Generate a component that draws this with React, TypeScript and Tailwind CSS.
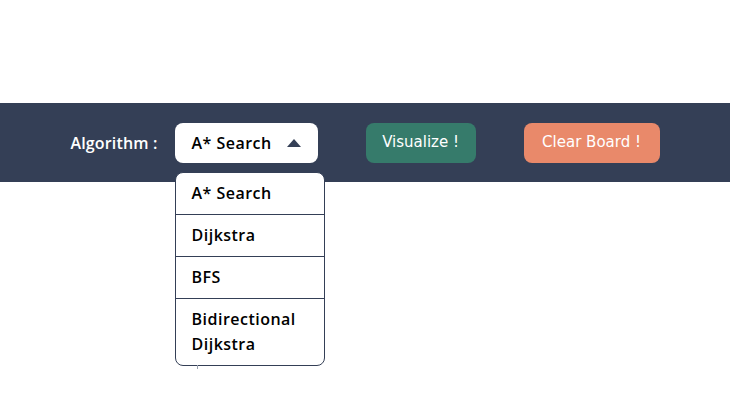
import React from "react";

const algorithms = ["A* Search", "Dijkstra", "BFS", "Bidirectional Dijkstra"];

export default function App() {
  return (
    <div
      className="w-full h-[404px] bg-white"
      style={{ fontFamily: "'Open Sans', 'Noto Sans', sans-serif" }}
    >
      <div className="h-[103px]" />
      <nav className="h-[79px] bg-[#343f56] flex items-center justify-center">
        <span className="text-white text-[16px] font-semibold tracking-[0.01em] mr-[17px]">
          Algorithm :
        </span>
        <div className="relative">
          <button className="w-[143px] h-[40px] bg-white rounded-lg flex items-center justify-between pl-[17px] pr-[17px] text-[16px] font-semibold tracking-[0.03em] text-black">
            <span>A* Search</span>
            <svg width="14" height="8" viewBox="0 0 14 8">
              <path d="M7 0 L14 8 L0 8 Z" fill="#343f56" />
            </svg>
          </button>
          <ul className="absolute left-0 top-[49px] w-[150px] bg-white border border-[#343f56] rounded-lg overflow-hidden">
            {algorithms.map((a, i) => (
              <li
                key={a}
                className={`px-[16px] text-[16px] font-semibold tracking-[0.03em] text-black leading-[25px] ${
                  i < algorithms.length - 1
                    ? "h-[42px] flex items-center border-b border-[#343f56]"
                    : "py-[8px]"
                }`}
              >
                {a}
              </li>
            ))}
          </ul>
          <div className="absolute left-[22px] top-[242px] w-px h-[4px] bg-gray-400" />
        </div>
        <button
          className="ml-[48px] w-[110px] h-[40px] rounded-lg bg-[#367b6b] text-white text-[15px]"
          style={{ fontFamily: "'DejaVu Sans', sans-serif" }}
        >
          Visualize !
        </button>
        <button
          className="ml-[48px] w-[136px] h-[40px] rounded-lg bg-[#e9896a] text-white text-[15px]"
          style={{ fontFamily: "'DejaVu Sans', sans-serif" }}
        >
          Clear Board !
        </button>
      </nav>
    </div>
  );
}
